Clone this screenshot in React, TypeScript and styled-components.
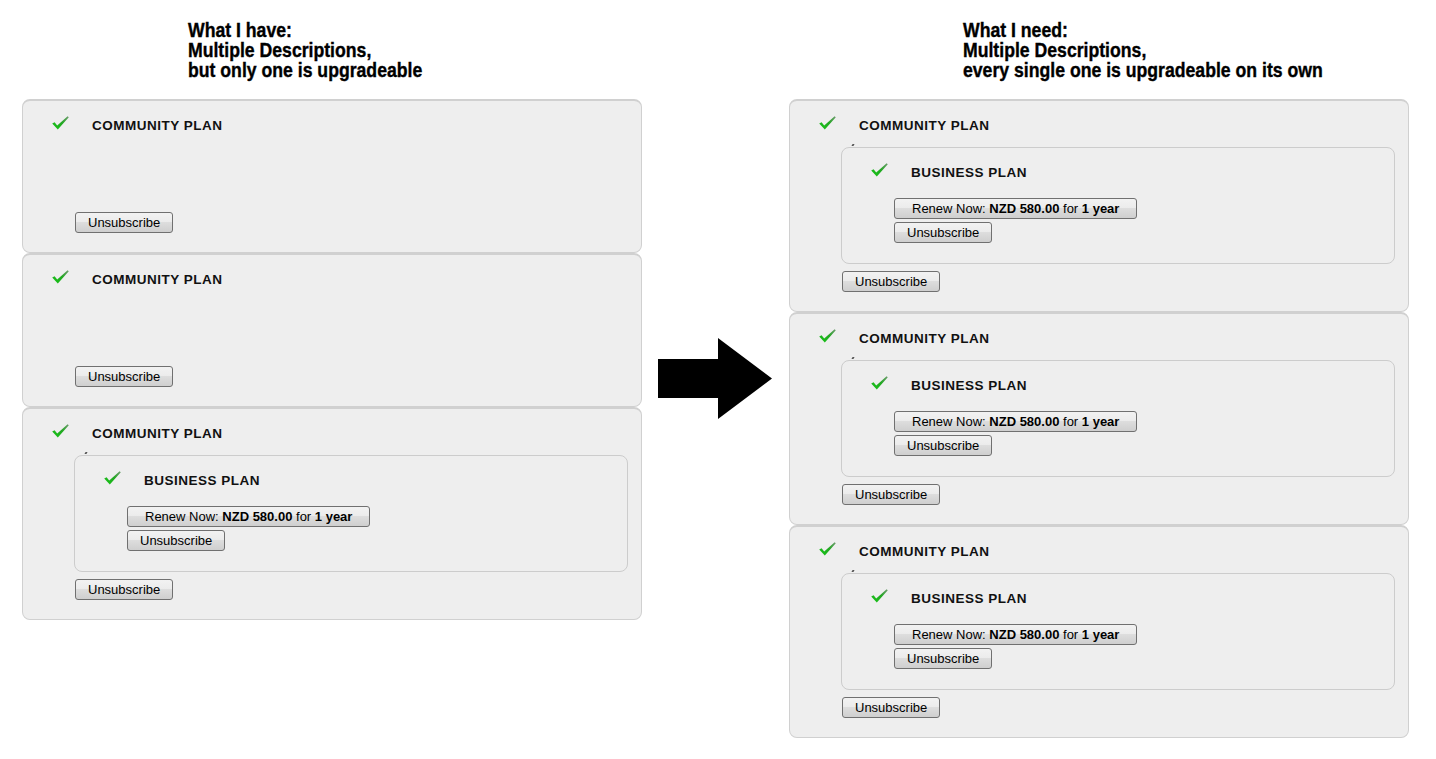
import React from "react";
import styled, { createGlobalStyle } from "styled-components";

const GlobalStyle = createGlobalStyle`
  body {
    margin: 0;
    background: #fff;
    font-family: "Liberation Sans", Arial, sans-serif;
  }
`;

const Page = styled.div`
  display: flex;
  align-items: flex-start;
  padding-left: 22px;
  width: 1436px;
  height: 759px;
  box-sizing: border-box;
`;

const Column = styled.div`
  width: 620px;
  display: flex;
  flex-direction: column;
`;

const Heading = styled.h2<{ $indent: number }>`
  margin: 20px 0 19px;
  padding-left: ${(p) => p.$indent}px;
  font-family: "Liberation Sans", Arial, sans-serif;
  font-size: 21px;
  line-height: 20px;
  font-weight: 700;
  color: #000;
  white-space: nowrap;
`;

// the reference uses a condensed heavy face, so squeeze the bold sans
const HeadingText = styled.span`
  display: inline-block;
  transform: scaleX(0.84);
  transform-origin: left top;
  -webkit-text-stroke: 0.4px #000;
`;

const ArrowCell = styled.div`
  width: 147px;
  padding: 338px 0 0 16px;
  box-sizing: border-box;
`;

const Box = styled.div<{ $nested?: boolean }>`
  position: relative;
  background: #eeeeee;
  border: 1px solid ${(p) => (p.$nested ? "#cccccc" : "#d0d0d0")};
  border-top-width: ${(p) => (p.$nested ? 1 : 2)}px;
  border-radius: 8px;
  padding: 14px 0 ${(p) => (p.$nested ? 20 : 19)}px 0;
  margin-right: ${(p) => (p.$nested ? 13 : 0)}px;
  margin-left: ${(p) => (p.$nested ? 51 : 0)}px;
`;

const Header = styled.div`
  display: flex;
  align-items: center;
  height: 20px;
  padding-left: 29px;
`;

const CheckMark = styled.svg`
  display: block;
  margin-top: -5px;
`;

const Title = styled.span`
  margin-left: 23px;
  font-size: 13.5px;
  font-weight: 700;
  letter-spacing: 0.5px;
  color: #111;
`;

const Description = styled.div<{ $empty?: boolean }>`
  position: relative;
  margin: 12px 0 7px;
  min-height: ${(p) => (p.$empty ? 58 : 0)}px;
  &::before {
    content: ${(p) => (p.$empty ? "none" : "''")};
    position: absolute;
    top: -3px;
    left: 62px;
    width: 2px;
    height: 2px;
    background: #555;
    transform: skewX(-30deg);
  }
`;

const Actions = styled.div<{ $gap: number }>`
  display: flex;
  flex-direction: column;
  align-items: flex-start;
  gap: 3px;
  padding-left: 52px;
  margin-top: ${(p) => p.$gap}px;
`;

const Button = styled.button<{ $wide?: boolean }>`
  height: 21px;
  padding: 0 ${(p) => (p.$wide ? 17 : 12)}px;
  border: 1px solid #707070;
  border-radius: 3px;
  background: linear-gradient(#f2f2f2 0%, #ebebeb 50%, #dddddd 50%, #cfcfcf 100%);
  font-family: "Liberation Sans", Arial, sans-serif;
  font-size: 13px;
  color: #000;
  line-height: 19px;
  cursor: pointer;
  b {
    font-weight: 700;
  }
`;

const Check = () => (
  <CheckMark width="17" height="14" viewBox="0 0 17 14">
    <defs>
      <linearGradient id="chk" x1="0" y1="1" x2="1" y2="0">
        <stop offset="0" stopColor="#14c814" />
        <stop offset="0.55" stopColor="#22a822" />
        <stop offset="1" stopColor="#6f9a6f" />
      </linearGradient>
    </defs>
    <path d="M0.2 7.6 L2.6 6.2 L5.2 9.4 L15.6 0.3 L16.8 1.2 L5.8 13.6 Z" fill="url(#chk)" />
  </CheckMark>
);

const Arrow = () => (
  <svg width="114" height="81" viewBox="0 0 114 81">
    <polygon points="0,21 60,21 60,0 114,40.5 60,81 60,60 0,60" fill="#000" />
  </svg>
);

const BusinessPlan = () => (
  <Box $nested>
    <Header>
      <Check />
      <Title>BUSINESS PLAN</Title>
    </Header>
    <Actions $gap={16}>
      <Button $wide>
        Renew Now: <b>NZD 580.00</b> for <b>1 year</b>
      </Button>
      <Button>Unsubscribe</Button>
    </Actions>
  </Box>
);

const CommunityPlan = ({ upgradeable }: { upgradeable: boolean }) => (
  <Box>
    <Header>
      <Check />
      <Title>COMMUNITY PLAN</Title>
    </Header>
    <Description $empty={!upgradeable}>{upgradeable && <BusinessPlan />}</Description>
    <Actions $gap={0}>
      <Button>Unsubscribe</Button>
    </Actions>
  </Box>
);

const HeadingLines = ({ lines, indent }: { lines: string[]; indent: number }) => (
  <Heading $indent={indent}>
    <HeadingText>
      {lines.map((line, i) => (
        <React.Fragment key={i}>
          {i > 0 && <br />}
          {line}
        </React.Fragment>
      ))}
    </HeadingText>
  </Heading>
);

export default function App() {
  return (
    <>
      <GlobalStyle />
      <Page>
        <Column>
          <HeadingLines
            indent={166}
            lines={["What I have:", "Multiple Descriptions,", "but only one is upgradeable"]}
          />
          <CommunityPlan upgradeable={false} />
          <CommunityPlan upgradeable={false} />
          <CommunityPlan upgradeable />
        </Column>
        <ArrowCell>
          <Arrow />
        </ArrowCell>
        <Column>
          <HeadingLines
            indent={174}
            lines={[
              "What I need:",
              "Multiple Descriptions,",
              "every single one is upgradeable on its own",
            ]}
          />
          <CommunityPlan upgradeable />
          <CommunityPlan upgradeable />
          <CommunityPlan upgradeable />
        </Column>
      </Page>
    </>
  );
}
